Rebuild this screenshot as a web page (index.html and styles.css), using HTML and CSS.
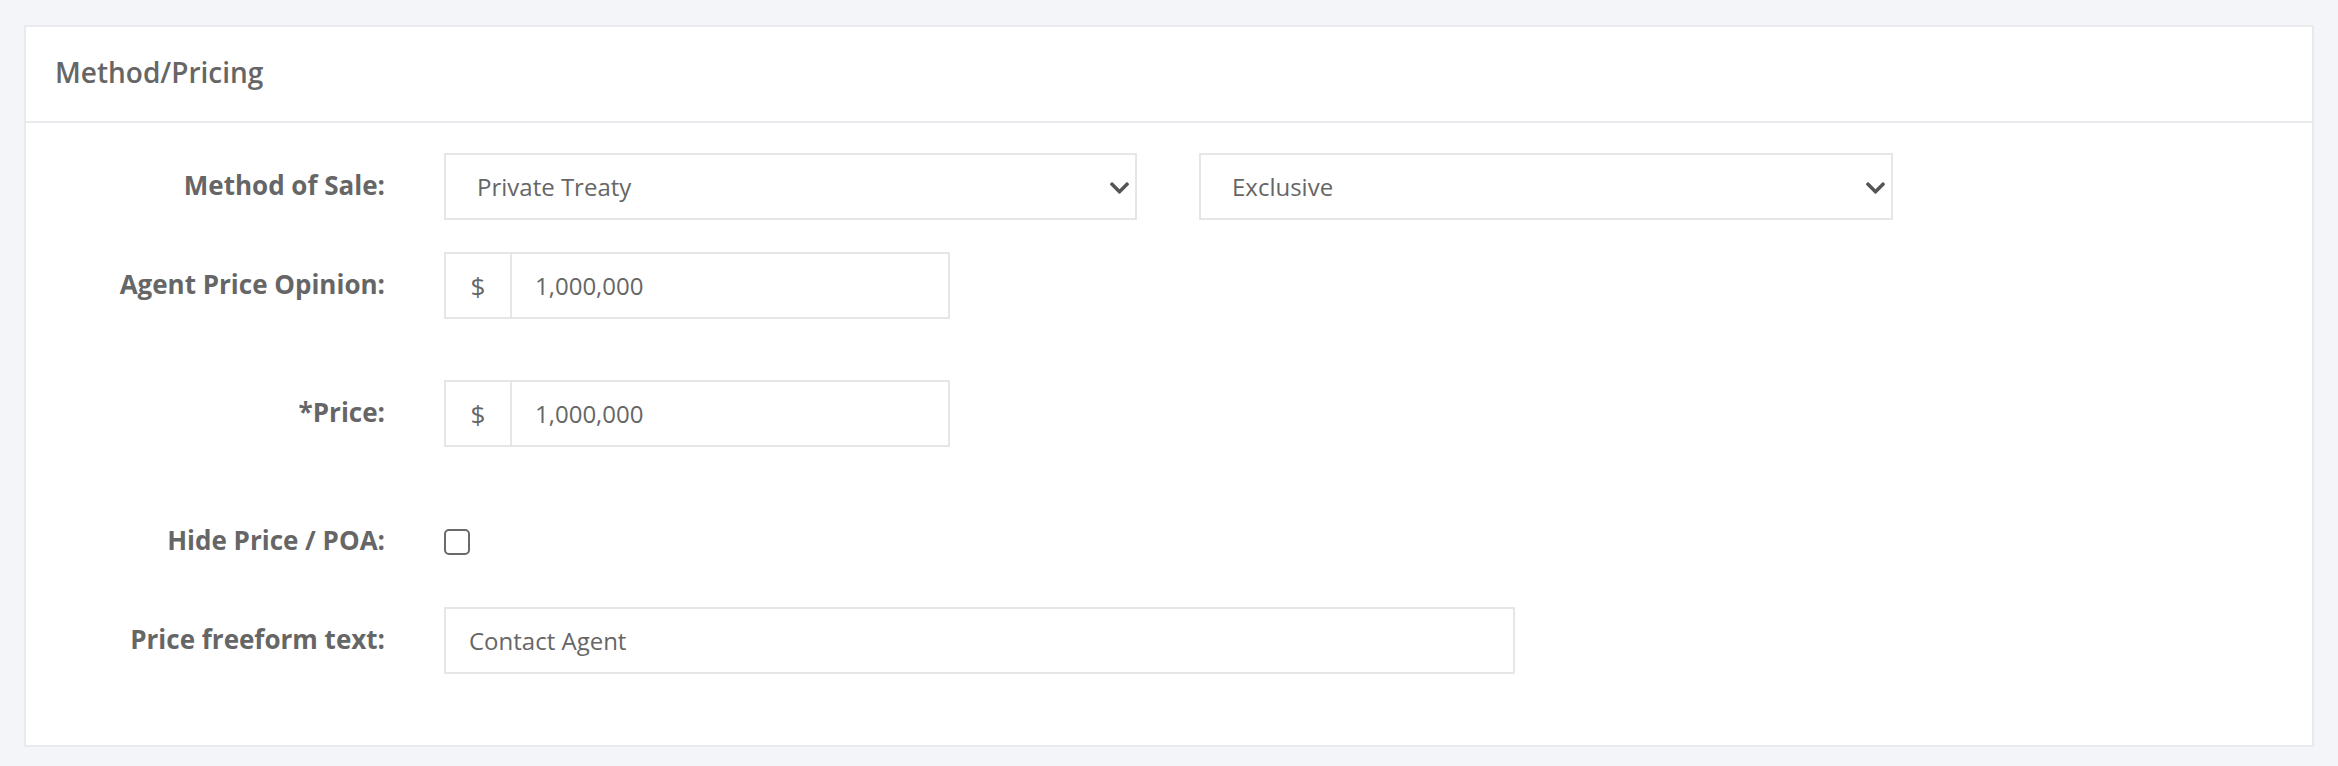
FILE: index.html
```html
<!DOCTYPE html>
<html lang="en">
<head>
<meta charset="utf-8">
<title>Method/Pricing</title>
<link rel="stylesheet" href="styles.css">
</head>
<body>
<div class="page">
  <section class="card">
    <header class="card-header">
      <h5 class="card-title">Method/Pricing</h5>
    </header>
    <div class="card-body">
      <div class="form-row">
        <label class="form-label">Method of Sale:</label>
        <div class="controls">
          <div class="select-wrap select-wrap--a">
            <select class="form-select">
              <option>Private Treaty</option>
            </select>
            <svg class="chevron" viewBox="5 123 438 266" width="19" height="12" aria-hidden="true"><path d="M207.029 381.476L12.686 187.132c-9.373-9.373-9.373-24.569 0-33.941l22.667-22.667c9.357-9.357 24.522-9.375 33.901-.04L224 284.505l154.745-154.021c9.379-9.335 24.544-9.317 33.901.04l22.667 22.667c9.373 9.373 9.373 24.569 0 33.941L240.971 381.476c-9.373 9.372-24.569 9.372-33.942 0z"/></svg>
          </div>
          <div class="select-wrap select-wrap--b">
            <select class="form-select">
              <option>Exclusive</option>
            </select>
            <svg class="chevron" viewBox="5 123 438 266" width="19" height="12" aria-hidden="true"><path d="M207.029 381.476L12.686 187.132c-9.373-9.373-9.373-24.569 0-33.941l22.667-22.667c9.357-9.357 24.522-9.375 33.901-.04L224 284.505l154.745-154.021c9.379-9.335 24.544-9.317 33.901.04l22.667 22.667c9.373 9.373 9.373 24.569 0 33.941L240.971 381.476c-9.373 9.372-24.569 9.372-33.942 0z"/></svg>
          </div>
        </div>
      </div>

      <div class="form-row form-row--spaced">
        <label class="form-label">Agent Price Opinion:</label>
        <div class="input-group">
          <span class="addon">$</span>
          <input class="form-input form-input--group" type="text" value="1,000,000">
        </div>
      </div>

      <div class="form-row form-row--spaced">
        <label class="form-label">*Price:</label>
        <div class="input-group">
          <span class="addon">$</span>
          <input class="form-input form-input--group" type="text" value="1,000,000">
        </div>
      </div>

      <div class="form-row">
        <label class="form-label">Hide Price / POA:</label>
        <input class="checkbox" type="checkbox">
      </div>

      <div class="form-row form-row--last">
        <label class="form-label">Price freeform text:</label>
        <input class="form-input form-input--wide" type="text" value="Contact Agent">
      </div>
    </div>
  </section>
</div>
</body>
</html>
```

FILE: styles.css
```css
* {
  box-sizing: border-box;
}

html, body {
  margin: 0;
  padding: 0;
  background: #f4f5f9;
}

body {
  font-family: "Open Sans", "Liberation Sans", sans-serif;
  color: #666666;
}

.page {
  padding: 25px 24px 19px 24px;
}

.card {
  background: #ffffff;
  border: 2px solid #e9eaee;
}

.card-header {
  height: 96px;
  border-bottom: 2px solid #e9eaee;
  display: flex;
  align-items: center;
  padding: 0 0 4px 29px;
}

.card-title {
  margin: 0;
  font-size: 28px;
  font-weight: 600;
  line-height: 1;
  color: #666666;
}

.card-body {
  padding: 30px 0 71px 0;
}

.form-row {
  display: flex;
  align-items: center;
  min-height: 67px;
  margin-bottom: 32px;
}

.form-row--spaced {
  margin-bottom: 61px;
}

.form-row--last {
  margin-bottom: 0;
}

.form-label {
  width: 359px;
  margin-right: 59px;
  padding-bottom: 2px;
  text-align: right;
  font-size: 26px;
  font-weight: 700;
  line-height: 1.2;
  color: #666666;
}

.controls {
  display: flex;
  gap: 62px;
}

.select-wrap {
  position: relative;
  height: 67px;
}

.select-wrap--a {
  width: 693px;
}

.select-wrap--b {
  width: 694px;
}

.form-select {
  -webkit-appearance: none;
  appearance: none;
  width: 100%;
  height: 100%;
  margin: 0;
  border: 2px solid #e6e6e6;
  border-radius: 0;
  background: #ffffff;
  padding: 0 40px 0 31px;
  font-family: "Open Sans", "Liberation Sans", sans-serif;
  font-size: 24px;
  color: #666666;
  outline: none;
}

.chevron {
  position: absolute;
  right: 8px;
  top: 29px;
  fill: #555555;
  pointer-events: none;
}

.input-group {
  display: flex;
  width: 506px;
  height: 67px;
}

.addon {
  width: 68px;
  flex: none;
  display: flex;
  align-items: center;
  justify-content: center;
  border: 2px solid #e6e6e6;
  background: #ffffff;
  font-size: 26px;
  color: #666666;
}

.form-input {
  height: 67px;
  margin: 0;
  border: 2px solid #e6e6e6;
  border-radius: 0;
  background: #ffffff;
  padding: 0 23px;
  font-family: "Open Sans", "Liberation Sans", sans-serif;
  font-size: 24px;
  color: #666666;
  outline: none;
}

.form-input--group {
  flex: 1;
  min-width: 0;
  border-left: 0;
}

.form-input--wide {
  width: 1071px;
}

.checkbox {
  -webkit-appearance: none;
  appearance: none;
  width: 26px;
  height: 26px;
  margin: 0;
  border: 2px solid #6a6a6a;
  border-radius: 5px;
  background: #ffffff;
}
```
